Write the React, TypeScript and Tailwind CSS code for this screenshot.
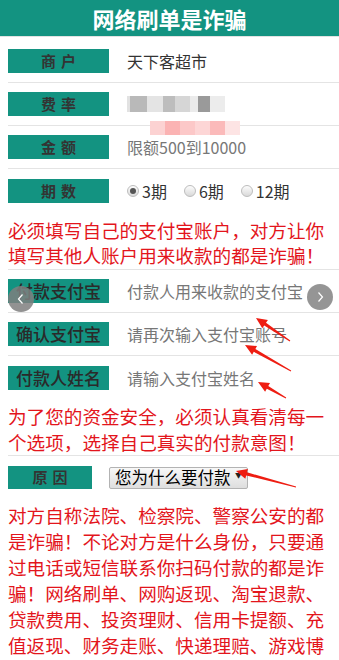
import React from "react";

type RowProps = {
  label: string;
  big?: boolean;
  border?: boolean;
  children?: React.ReactNode;
};

function Row({ label, big, border = true, children }: RowProps) {
  return (
    <div
      className={
        "flex items-center h-[43px] " +
        (border ? "border-b border-[#e4e4e4]" : "")
      }
    >
      {big ? (
        <div className="w-[101px] h-[24px] shrink-0 bg-[#139381] flex items-center justify-center text-[17px] leading-[24px] font-medium text-[#2a2a2a] whitespace-nowrap">
          {label}
        </div>
      ) : (
        <div className="w-[101px] h-[24px] shrink-0 bg-[#139381] flex items-center justify-center pl-[5px] text-[15px] leading-[24px] font-bold tracking-[5px] text-[#333]">
          {label}
        </div>
      )}
      <div className="ml-[18px] flex items-center text-[16px] whitespace-nowrap overflow-hidden">
        {children}
      </div>
    </div>
  );
}

function Radio({ checked, label }: { checked?: boolean; label: string }) {
  return (
    <div className="flex items-center">
      <div className="w-[12px] h-[12px] rounded-full border border-[#bdbdbd] bg-linear-to-b from-[#fdfdfd] to-[#d9d9d9] flex items-center justify-center">
        {checked && <div className="w-[6px] h-[6px] rounded-full bg-[#555]" />}
      </div>
      <span className="ml-[3px] text-[16px] text-[#333]">{label}</span>
    </div>
  );
}

type Arrow = { tx: number; ty: number; hx: number; hy: number };

function arrowPoints(a: Arrow) {
  const dx = a.hx - a.tx;
  const dy = a.hy - a.ty;
  const len = Math.hypot(dx, dy);
  const ux = dx / len;
  const uy = dy / len;
  const nx = -uy;
  const ny = ux;
  const L = 11;
  const W = 5;
  const bx = a.hx - ux * L;
  const by = a.hy - uy * L;
  const pts: [number, number][] = [
    [a.tx + nx * 0.5, a.ty + ny * 0.5],
    [bx + nx * 1.6, by + ny * 1.6],
    [bx + nx * W, by + ny * W],
    [a.hx, a.hy],
    [bx - nx * W, by - ny * W],
    [bx - nx * 1.6, by - ny * 1.6],
    [a.tx - nx * 0.5, a.ty - ny * 0.5],
  ];
  return pts.map((p) => p[0].toFixed(1) + "," + p[1].toFixed(1)).join(" ");
}

const arrows: Arrow[] = [
  { tx: 290, ty: 341, hx: 256, hy: 318 },
  { tx: 291, ty: 371, hx: 245, hy: 345 },
  { tx: 286, ty: 398, hx: 258, hy: 382 },
  { tx: 296, ty: 487, hx: 236, hy: 471 },
];

export default function App() {
  return (
    <div className="relative w-[339px] min-h-[660px] bg-white overflow-hidden font-['Noto_Sans_CJK_SC','Noto_Sans',sans-serif]">
      <header className="h-[37px] bg-[#139381] flex items-center justify-center border-b border-[#e2e2e2]">
        <h1 className="text-white text-[22px] font-bold leading-none">网络刷单是诈骗</h1>
      </header>

      <div className="mt-[3px] pl-2">
        <Row label="商户">
          <span className="text-[#333]">天下客超市</span>
        </Row>
        <Row label="费率">
          <div className="flex h-[16px] -ml-[5px]">
            <div className="w-[8px] bg-[#e2e2e2]" />
            <div className="w-[17px] bg-[#b9b9b9]" />
            <div className="w-[16px] bg-[#e4e4e4]" />
            <div className="w-[12px] bg-[#bdbdbd]" />
            <div className="w-[15px] bg-[#d6d6d6]" />
            <div className="w-[8px] bg-[#ebebeb]" />
            <div className="w-[12px] bg-[#9a9a9a]" />
            <div className="w-[15px] bg-[#ececec]" />
          </div>
        </Row>
        <Row label="金额">
          <span className="text-[#777]">限额500到10000</span>
        </Row>
        <Row label="期数" border={false}>
          <div className="flex items-center gap-[17px]">
            <Radio checked label="3期" />
            <Radio label="6期" />
            <Radio label="12期" />
          </div>
        </Row>
      </div>

      <p className="mt-[5px] pl-2 pr-1 text-[18.6px] leading-[25px] text-[#e3151c]">
        必须填写自己的支付宝账户，对方让你填写其他人账户用来收款的都是诈骗！
      </p>
      <div className="ml-2 mt-[2px] border-b border-[#e4e4e4]" />

      <div className="pl-2">
        <Row label="付款支付宝" big>
          <span className="text-[#777]">付款人用来收款的支付宝</span>
        </Row>
        <Row label="确认支付宝" big>
          <span className="text-[#777]">请再次输入支付宝账号</span>
        </Row>
        <Row label="付款人姓名" big border={false}>
          <span className="text-[#777]">请输入支付宝姓名</span>
        </Row>
      </div>

      <p className="mt-[4px] pl-2 pr-1 text-[18.6px] leading-[26px] text-[#e3151c]">
        为了您的资金安全，必须认真看清每一个选项，选择自己真实的付款意图！
      </p>
      <div className="ml-2 border-b border-[#e4e4e4]" />

      <div className="pl-2 pt-[10px] flex items-center">
        <div className="w-[84px] h-[23px] shrink-0 bg-[#139381] flex items-center justify-center pl-[5px] text-[15px] font-bold tracking-[5px] text-[#333]">
          原因
        </div>
        <div className="ml-[17px] w-[139px] h-[22px] border border-[#b3b3b3] rounded-[2px] bg-linear-to-b from-[#f8f8f8] to-[#dedede] flex items-center pl-[5px] text-[16.5px] text-black whitespace-nowrap">
          您为什么要付款
          <span className="ml-auto mr-[5px] text-[7px] leading-none text-[#222] self-start mt-[4px]">▼</span>
        </div>
      </div>

      <p className="mt-[13px] pl-2 pr-1 text-[18.6px] leading-[26px] text-[#e3151c]">
        对方自称法院、检察院、警察公安的都是诈骗！不论对方是什么身份，只要通过电话或短信联系你扫码付款的都是诈骗！网络刷单、网购返现、淘宝退款、贷款费用、投资理财、信用卡提额、充值返现、财务走账、快递理赔、游戏博彩等都是诈骗！
      </p>

      {/* pink mosaic redaction overlay */}
      <div className="absolute left-[150px] top-[121px] flex h-[14px]">
        <div className="w-[15px] bg-[#fcd2d2]" />
        <div className="w-[15px] bg-[#fbb3b3]" />
        <div className="w-[15px] bg-[#fcc8c8]" />
        <div className="w-[15px] bg-[#fdd6d6]" />
        <div className="w-[15px] bg-[#fbbaba]" />
        <div className="w-[15px] bg-[#fde4e4]" />
      </div>

      {/* carousel nav circles */}
      <div className="absolute left-[8px] top-[286px] w-[26px] h-[26px] rounded-full bg-[#7f7f7f]/85 flex items-center justify-center">
        <svg width="10" height="12" viewBox="0 0 10 12">
          <path d="M6.5 1.5 L2.5 6 L6.5 10.5" fill="none" stroke="white" strokeWidth="1.2" />
        </svg>
      </div>
      <div className="absolute left-[307px] top-[284px] w-[26px] h-[26px] rounded-full bg-[#8a8a8a]/90 flex items-center justify-center">
        <svg width="10" height="12" viewBox="0 0 10 12">
          <path d="M3.5 1.5 L7.5 6 L3.5 10.5" fill="none" stroke="white" strokeWidth="1.2" />
        </svg>
      </div>

      {/* red annotation arrows */}
      <svg className="absolute left-0 top-0 pointer-events-none" width="339" height="660">
        {arrows.map((a, i) => (
          <polygon key={i} points={arrowPoints(a)} fill="#ee1d12" />
        ))}
      </svg>
    </div>
  );
}
